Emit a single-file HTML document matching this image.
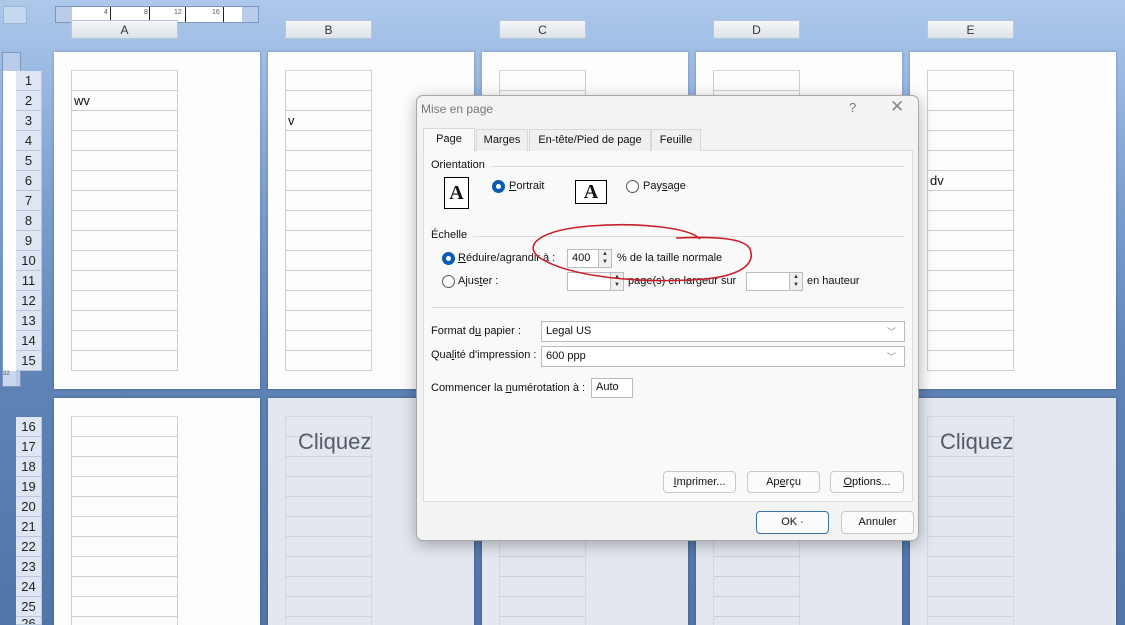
<!DOCTYPE html>
<html style="width:1125px;height:625px;overflow:hidden"><head><meta charset="utf-8"><style>
*{margin:0;padding:0;box-sizing:border-box}
body{width:1125px;height:625px;overflow:hidden;position:relative;font-family:"Liberation Sans",sans-serif;background:linear-gradient(180deg,#adc8ea 0px,#a2bfe6 45px,#7c9fd0 200px,#5f83b7 380px,#5275a9 625px)}
.a{position:absolute}
.page{position:absolute;background:#fdfdfd;box-shadow:0 0 3px rgba(0,0,0,.25)}
.gray{background:#e3e8f0}
.grid{position:absolute;border:1px solid #cfcfcf;border-top:1px solid #d8d8d8;background:repeating-linear-gradient(180deg,transparent 0,transparent 19px,#cfcfcf 19px,#cfcfcf 20px)}
.ch{position:absolute;top:20px;height:19px;background:linear-gradient(#f4f6f9,#dde3ea);border:1px solid #b6c6dc;font-size:12px;color:#333;text-align:center;line-height:18px}
.rh{position:absolute;left:16px;width:26px;height:20px;background:#dde6f2;border-bottom:1px solid #b9c7da;border-right:1px solid #b9c7da;font-size:13px;color:#222;text-align:center;line-height:20px}
.cell{position:absolute;font-size:13px;color:#111}
.clq{position:absolute;font-size:22px;color:#555b66}
.dlg{position:absolute;left:416px;top:95px;width:503px;height:446px;background:#f3f3f3;border:1px solid #a8a8a8;border-radius:7px;box-shadow:0 4px 16px rgba(0,0,0,.3);font-size:11px;color:#111}
.d{position:absolute;white-space:nowrap}
.tab{position:absolute;top:33px;height:22px;border:1px solid #d8d8d8;border-bottom:none;background:#f0f0f0;text-align:center;line-height:21px}
.radio{position:absolute;width:13px;height:13px;border-radius:50%;border:1px solid #555;background:#fff}
.radio.on{border:none;background:#0a5bb4}
.radio.on:after{content:"";position:absolute;left:4px;top:4px;width:5px;height:5px;border-radius:50%;background:#fff}
.inp{position:absolute;background:#fff;border:1px solid #bcbcbc;height:19px;line-height:17px;padding-left:4px}
.spin{position:absolute;width:14px;height:19px;border:1px solid #bcbcbc;background:#f0f0f0;font-size:6px;line-height:8px;text-align:center;color:#333}
.btn{position:absolute;height:22px;border:1px solid #c8c8c8;border-radius:4px;background:#fbfbfb;text-align:center;line-height:20px}
u{text-decoration:underline}
</style></head><body>
<div class="a" style="left:3px;top:6px;width:24px;height:18px;background:#c6d8ef;border:1px solid #9fb6d6"></div>
<div class="a" style="left:55px;top:6px;width:204px;height:17px;background:#b9cdea;border:1px solid #7d96bb"></div>
<div class="a" style="left:72px;top:7px;width:170px;height:15px;background:#fff;font-size:7px;color:#555">
<span class="a" style="left:32px;top:2px">4</span><span class="a" style="left:38px;top:0;width:1px;height:15px;background:#222"></span>
<span class="a" style="left:72px;top:2px">8</span><span class="a" style="left:77px;top:0;width:1px;height:15px;background:#222"></span>
<span class="a" style="left:102px;top:2px">12</span><span class="a" style="left:113px;top:0;width:1px;height:15px;background:#222"></span>
<span class="a" style="left:140px;top:2px">16</span><span class="a" style="left:151px;top:0;width:1px;height:15px;background:#222"></span>
</div>
<div class="ch" style="left:71px;width:107px">A</div>
<div class="ch" style="left:285px;width:87px">B</div>
<div class="ch" style="left:499px;width:87px">C</div>
<div class="ch" style="left:713px;width:87px">D</div>
<div class="ch" style="left:927px;width:87px">E</div>
<div class="a" style="left:2px;top:52px;width:19px;height:335px;background:#b9cdea;border:1px solid #7d96bb"></div>
<div class="a" style="left:3px;top:71px;width:13px;height:300px;background:#fff"></div>
<div class="a" style="left:3px;top:371px;width:13px;height:15px;background:#c8d8ee;font-size:6px;color:#555">32</div>
<div class="page" style="left:54px;top:52px;width:206px;height:337px"></div>
<div class="page" style="left:268px;top:52px;width:206px;height:337px"></div>
<div class="page" style="left:482px;top:52px;width:206px;height:337px"></div>
<div class="page" style="left:696px;top:52px;width:206px;height:337px"></div>
<div class="page" style="left:910px;top:52px;width:206px;height:337px"></div>
<div class="grid" style="left:71px;top:70px;width:107px;height:301px"></div>
<div class="grid" style="left:285px;top:70px;width:87px;height:301px"></div>
<div class="grid" style="left:499px;top:70px;width:87px;height:301px"></div>
<div class="grid" style="left:713px;top:70px;width:87px;height:301px"></div>
<div class="grid" style="left:927px;top:70px;width:87px;height:301px"></div>
<div class="page" style="left:54px;top:398px;width:206px;height:227px"></div>
<div class="page gray" style="left:268px;top:398px;width:206px;height:227px"></div>
<div class="page gray" style="left:482px;top:398px;width:206px;height:227px"></div>
<div class="page gray" style="left:696px;top:398px;width:206px;height:227px"></div>
<div class="page gray" style="left:910px;top:398px;width:206px;height:227px"></div>
<div class="grid" style="left:71px;top:416px;width:107px;height:209px;border-bottom:none"></div>
<div class="grid" style="left:285px;top:416px;width:87px;height:209px;border-bottom:none;border-color:#d3d8e0;background:repeating-linear-gradient(180deg,transparent 0,transparent 19px,#d0d5de 19px,#d0d5de 20px)"></div>
<div class="grid" style="left:499px;top:416px;width:87px;height:209px;border-bottom:none;border-color:#d3d8e0"></div>
<div class="grid" style="left:713px;top:416px;width:87px;height:209px;border-bottom:none;border-color:#d3d8e0"></div>
<div class="grid" style="left:927px;top:416px;width:87px;height:209px;border-bottom:none;border-color:#d3d8e0;background:repeating-linear-gradient(180deg,transparent 0,transparent 19px,#d0d5de 19px,#d0d5de 20px)"></div>
<div class="clq" style="left:298px;top:429px">Cliquez</div>
<div class="clq" style="left:940px;top:429px">Cliquez</div>
<div class="cell" style="left:74px;top:93px">wv</div>
<div class="cell" style="left:288px;top:113px">v</div>
<div class="cell" style="left:930px;top:173px">dv</div>
<div class="rh" style="top:71px">1</div><div class="rh" style="top:91px">2</div><div class="rh" style="top:111px">3</div><div class="rh" style="top:131px">4</div><div class="rh" style="top:151px">5</div><div class="rh" style="top:171px">6</div><div class="rh" style="top:191px">7</div><div class="rh" style="top:211px">8</div><div class="rh" style="top:231px">9</div><div class="rh" style="top:251px">10</div><div class="rh" style="top:271px">11</div><div class="rh" style="top:291px">12</div><div class="rh" style="top:311px">13</div><div class="rh" style="top:331px">14</div><div class="rh" style="top:351px">15</div>
<div class="rh" style="top:417px">16</div><div class="rh" style="top:437px">17</div><div class="rh" style="top:457px">18</div><div class="rh" style="top:477px">19</div><div class="rh" style="top:497px">20</div><div class="rh" style="top:517px">21</div><div class="rh" style="top:537px">22</div><div class="rh" style="top:557px">23</div><div class="rh" style="top:577px">24</div><div class="rh" style="top:597px">25</div><div class="rh" style="top:617px;height:8px;overflow:hidden;line-height:14px">26</div>
<div class="dlg">
<div class="d" style="left:4px;top:6px;font-size:12px;color:#777">Mise en page</div>
<div class="d" style="left:432px;top:4px;font-size:13px;color:#777">?</div>
<div class="d" style="left:473px;top:1px;font-size:17px;color:#888">✕</div>
<div class="a" style="left:6px;top:54px;width:490px;height:352px;background:#f9f9f9;border:1px solid #dcdcdc"></div>
<div class="tab" style="left:6px;top:32px;width:52px;height:24px;background:#f9f9f9;z-index:2">Page</div>
<div class="tab" style="left:59px;width:52px">Marges</div>
<div class="tab" style="left:112px;width:122px">En-tête/Pied de page</div>
<div class="tab" style="left:234px;width:50px">Feuille</div>
<div class="d" style="left:14px;top:63px">Orientation</div>
<div class="a" style="left:74px;top:70px;width:414px;height:1px;background:#dcdcdc"></div>
<div class="a" style="left:27px;top:81px;width:25px;height:32px;border:1px solid #000;background:#fff;font:bold 20px 'Liberation Serif',serif;text-align:center;line-height:30px">A</div>
<div class="radio on" style="left:75px;top:84px"></div>
<div class="d" style="left:92px;top:84px"><u>P</u>ortrait</div>
<div class="a" style="left:158px;top:84px;width:32px;height:24px;border:1px solid #000;background:#fff;font:bold 20px 'Liberation Serif',serif;text-align:center;line-height:23px">A</div>
<div class="radio" style="left:209px;top:84px"></div>
<div class="d" style="left:226px;top:84px">Pay<u>s</u>age</div>
<div class="d" style="left:14px;top:133px">Échelle</div>
<div class="a" style="left:56px;top:140px;width:432px;height:1px;background:#dcdcdc"></div>
<div class="radio on" style="left:25px;top:156px"></div>
<div class="d" style="left:41px;top:156px"><u>R</u>éduire/agrandir à :</div>
<div class="inp" style="left:150px;top:153px;width:32px">400</div>
<div class="spin" style="left:181px;top:153px">▲<br>▼</div>
<div class="d" style="left:200px;top:156px">% de la taille normale</div>
<div class="radio" style="left:25px;top:179px"></div>
<div class="d" style="left:41px;top:179px">Ajus<u>t</u>er :</div>
<div class="inp" style="left:150px;top:176px;width:44px"></div>
<div class="spin" style="left:193px;top:176px">▲<br>▼</div>
<div class="d" style="left:211px;top:179px">page(s) en largeur sur</div>
<div class="inp" style="left:329px;top:176px;width:44px"></div>
<div class="spin" style="left:372px;top:176px">▲<br>▼</div>
<div class="d" style="left:390px;top:179px">en hauteur</div>
<div class="a" style="left:14px;top:211px;width:474px;height:1px;background:#dcdcdc"></div>
<div class="d" style="left:14px;top:229px">Format d<u>u</u> papier :</div>
<div class="inp" style="left:124px;top:225px;width:364px;height:21px;line-height:19px">Legal US</div>
<div class="d" style="left:470px;top:229px;color:#888;font-size:9px">﹀</div>
<div class="d" style="left:14px;top:253px">Qua<u>l</u>ité d'impression :</div>
<div class="inp" style="left:124px;top:250px;width:364px;height:21px;line-height:19px">600 ppp</div>
<div class="d" style="left:470px;top:254px;color:#888;font-size:9px">﹀</div>
<div class="d" style="left:14px;top:286px">Commencer la <u>n</u>umérotation à :</div>
<div class="inp" style="left:174px;top:282px;width:42px;height:20px">Auto</div>
<div class="btn" style="left:246px;top:375px;width:73px"><u>I</u>mprimer...</div>
<div class="btn" style="left:330px;top:375px;width:73px">Ap<u>e</u>rçu</div>
<div class="btn" style="left:413px;top:375px;width:74px"><u>O</u>ptions...</div>
<div class="btn" style="left:339px;top:415px;width:73px;height:23px;border:1px solid #3a6ea5;border-radius:4px">OK ·</div>
<div class="btn" style="left:424px;top:415px;width:73px;height:23px">Annuler</div>
</div>
<svg class="a" style="left:0;top:0" width="1125" height="625"><path d="M700 239 C690 228 640 222 590 226 C540 230 522 245 540 258 C570 277 640 284 705 279 C745 275 755 262 750 249 C745 239 720 236 676 238" fill="none" stroke="#c8202a" stroke-width="1.6"/></svg>
</body></html>
